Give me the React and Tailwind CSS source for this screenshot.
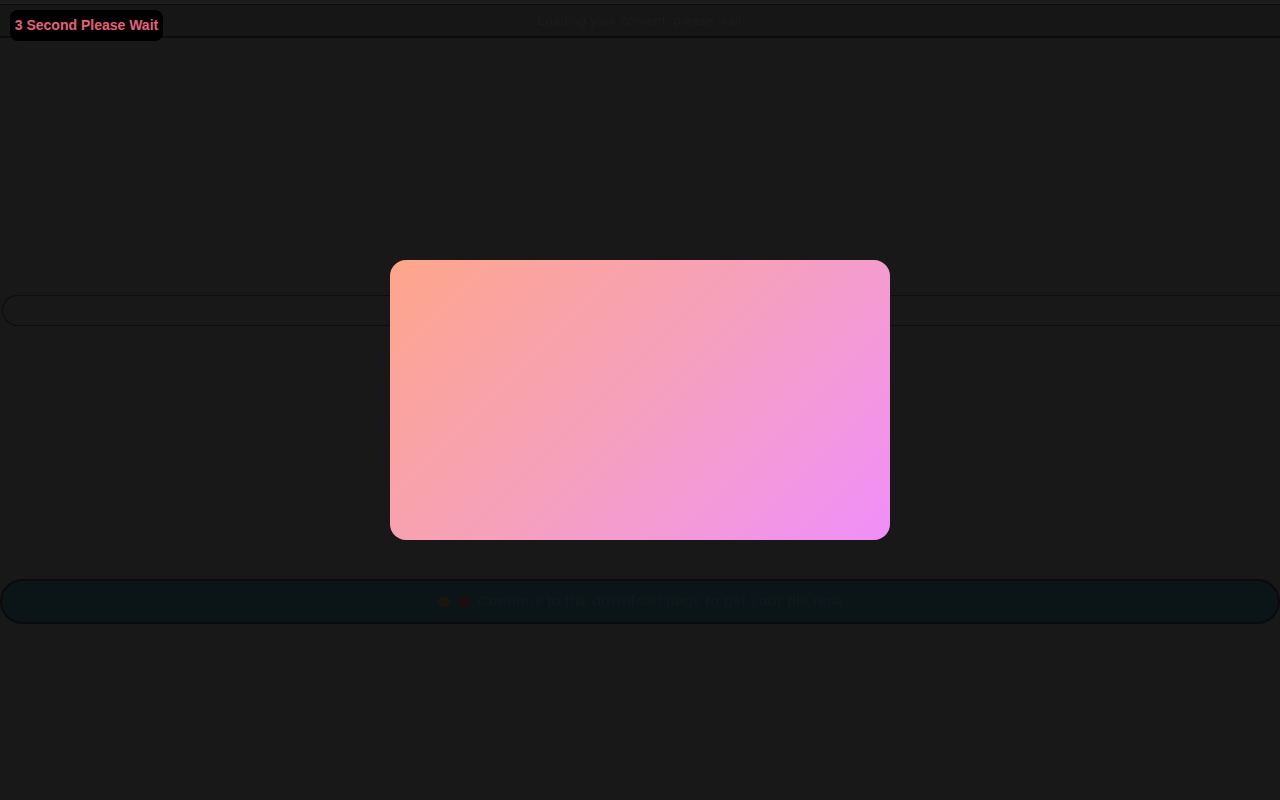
import React from 'react';

const App = () => {
  return (
    <div className="relative min-h-screen w-full bg-[#181818] overflow-hidden" style={{ fontFamily: '"Liberation Sans", Arial, sans-serif' }}>
      {/* Dimmed page underneath */}
      <div className="h-[5px] bg-[#1c1c1c] border-b border-[#0c0c0c]" />
      <header className="h-[33px] bg-[#161616] border-b-2 border-[#0c0c0c] flex items-center justify-center">
        <span className="text-[13px] text-[#1b1b1b] tracking-wide">Loading your content, please wait</span>
      </header>

      <div className="h-[257px]" />
      <div className="h-[31px] ml-[2px] rounded-l-2xl border-y border-l border-[#0d0d0d] bg-[#181818]" />

      <div className="h-[253px]" />
      <div className="h-[45px] rounded-full border-2 border-[#090b0c] bg-[#0b1417] flex items-center justify-center gap-2">
        <span className="w-3 h-3 rounded-full bg-[#17170f]" />
        <span className="w-3 h-3 rounded-full bg-[#1a0f10]" />
        <span className="text-[15px] font-bold text-[#0e181b]">Continue to the download page to get your file now</span>
      </div>

      {/* Countdown badge */}
      <div className="absolute left-[10px] top-[10px] h-[31px] w-[153px] rounded-lg bg-black flex items-center justify-center">
        <span className="text-[14px] font-bold text-[#e5627a]">3 Second Please Wait</span>
      </div>

      {/* Gradient card */}
      <div className="fixed inset-0 flex items-center justify-center pointer-events-none">
        <div className="w-[500px] h-[280px] rounded-2xl bg-linear-135 from-[#fea68a] via-[#f6a0bd] to-[#f08ef9]" />
      </div>
    </div>
  );
};

export default App;
